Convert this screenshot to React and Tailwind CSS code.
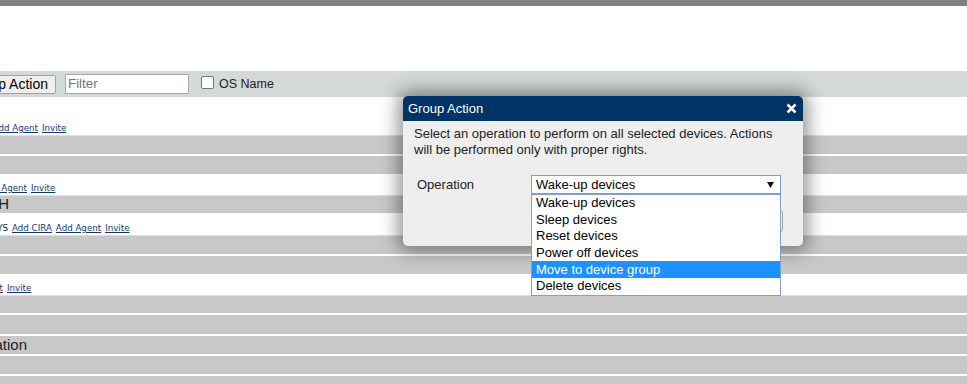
const LINK = "text-[#14386a] underline decoration-[1px] underline-offset-[1px]";

function Gray({ h, line, children }) {
  return (
    <div
      className={
        "flex items-center bg-[#c8c8c8] text-[15px] text-[#222] " +
        (line ? "border-t border-[#dedede] " : "")
      }
      style={{ height: h }}
    >
      {children}
    </div>
  );
}

function Gap() {
  return <div className="h-[2px] bg-white" />;
}

function Links({ h, edge, first, rest, pre }) {
  return (
    <div
      className="flex items-end pb-[1px] font-['DejaVu_Sans',sans-serif] text-[8.7px] leading-[11px] whitespace-nowrap"
      style={{ height: h }}
    >
      <div className="flex shrink-0 justify-end" style={{ width: edge }}>
        {pre ? (
          <span className="text-[#222]">{first}</span>
        ) : (
          <a className={LINK}>{first}</a>
        )}
      </div>
      {rest.map((r) => (
        <a key={r} className={"ml-[4px] " + LINK}>
          {r}
        </a>
      ))}
    </div>
  );
}

const OPTIONS = [
  "Wake-up devices",
  "Sleep devices",
  "Reset devices",
  "Power off devices",
  "Move to device group",
  "Delete devices",
];

export default function App() {
  return (
    <div className="relative h-[384px] w-full overflow-hidden bg-white font-['Liberation_Sans',Arial,sans-serif]">
      <div className="h-[6px] bg-[#808080]" />
      <div className="h-[65px]" />

      {/* toolbar */}
      <div className="flex h-[26px] items-center bg-[#d3d9d6] whitespace-nowrap">
        <div className="flex w-[56px] shrink-0 justify-end">
          <button className="h-[19px] shrink-0 rounded-[2px] border border-[#a3a3a3] bg-[#efefef] px-[7px] text-[14px] leading-[17px] text-black">
            Group Action
          </button>
        </div>
        <div className="ml-[9px] flex h-[20px] w-[124px] shrink-0 items-center border border-[#a9a9a9] bg-white pl-[2px] text-[13.33px] text-[#757575]">
          Filter
        </div>
        <div className="ml-[12px] -mt-[3px] h-[13px] w-[13px] shrink-0 rounded-[2px] border border-[#767676] bg-white" />
        <span className="ml-[5px] text-[12.5px] text-[#222]">OS Name</span>
      </div>

      {/* list */}
      <Links h={38} edge={38} first="Add Agent" rest={["Invite"]} />
      <Gray h={19} line />
      <Gap />
      <Gray h={18} />
      <Links h={21} edge={27} first="Add Agent" rest={["Invite"]} />
      <Gray h={18} line>
        <div className="flex w-[9px] shrink-0 justify-end whitespace-nowrap">
          BRANCH
        </div>
      </Gray>
      <Links
        h={22}
        edge={8}
        pre
        first="KEYS"
        rest={["Add CIRA", "Add Agent", "Invite"]}
      />
      <Gray h={19} line />
      <Gap />
      <Gray h={18} />
      <Links h={21} edge={3} first="Add Agent" rest={["Invite"]} />
      <Gray h={18} line />
      <Gap />
      <Gray h={19} />
      <Gap />
      <Gray h={18}>
        <div className="flex w-[27px] shrink-0 justify-end whitespace-nowrap">
          Information
        </div>
      </Gray>
      <Gap />
      <Gray h={18} />
      <Gap />
      <Gray h={18} />

      {/* dialog */}
      <div className="absolute left-[403px] top-[96px] w-[400px] rounded-[5px] bg-[#eeeeee] shadow-[0_0_18px_5px_rgba(0,0,0,0.42)]">
        <div className="flex h-[25px] items-center justify-between rounded-t-[5px] bg-[#003366] pl-[5px] pr-[6px] text-[13px] text-white">
          <span>Group Action</span>
          <svg width="11" height="11" viewBox="0 0 11 11">
            <path
              d="M1.5 1.5 L9.5 9.5 M9.5 1.5 L1.5 9.5"
              stroke="white"
              strokeWidth="2.5"
            />
          </svg>
        </div>
        <div className="h-[125px] px-[11px] pt-[5px] text-[13px] leading-[16px] text-[#222]">
          <p>
            Select an operation to perform on all selected devices. Actions
            will be performed only with proper rights.
          </p>
          <div className="mt-[17px] flex items-center pl-[3px]">
            <span className="w-[114px] shrink-0">Operation</span>
            <div className="relative">
              <div className="flex h-[19px] w-[250px] items-center justify-between border border-[#7c9ed8] bg-white pl-[4px] pr-[6px] text-black">
                <span>Wake-up devices</span>
                <svg width="7" height="6" viewBox="0 0 7 6">
                  <path d="M0 0 H7 L3.5 6 Z" fill="#111" />
                </svg>
              </div>
              <div className="absolute left-0 top-[19px] z-10 w-[250px] border border-[#7f9fd2] bg-white text-black">
                {OPTIONS.map((o) => (
                  <div
                    key={o}
                    className={
                      "flex h-[16.6px] items-center pl-[4px] " +
                      (o === "Move to device group"
                        ? "bg-[#1e90ff] text-white"
                        : "")
                    }
                  >
                    {o}
                  </div>
                ))}
              </div>
            </div>
          </div>
          <div className="mt-[16px] flex justify-end pr-[9px]">
            <button className="h-[22px] w-[80px] rounded-[3px] border border-[#a0a0a0] bg-[#f2f2f2] text-[13px]">
              OK
            </button>
          </div>
        </div>
      </div>
    </div>
  );
}
